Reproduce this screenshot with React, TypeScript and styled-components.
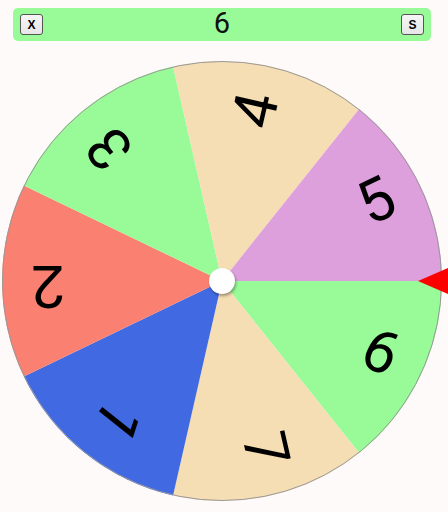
import styled, { createGlobalStyle } from "styled-components";

const GlobalStyle = createGlobalStyle`
  html, body {
    margin: 0;
    padding: 0;
    background: #fffafa;
    font-family: "Liberation Sans", Arial, sans-serif;
    overflow: hidden;
  }
`;

const Wrapper = styled.div`
  width: 444px;
  display: flex;
  flex-direction: column;
  align-items: center;
`;

const Bar = styled.div`
  margin-top: 8px;
  width: 418px;
  height: 33px;
  box-sizing: border-box;
  padding: 0 7px;
  background: #98fb98;
  border-radius: 5px;
  display: flex;
  align-items: center;
  justify-content: space-between;
`;

const Result = styled.div`
  font-family: Roboto, "Liberation Sans", sans-serif;
  font-size: 29px;
  line-height: 29px;
  color: #111;
  margin-top: -3px;
`;

const SmallButton = styled.button`
  width: 23px;
  height: 21px;
  padding: 0;
  box-sizing: border-box;
  border: 1px solid #555;
  border-radius: 3px;
  background: linear-gradient(#f6f6f6, #e6e6e6);
  font-family: "Liberation Sans", Arial, sans-serif;
  font-weight: bold;
  font-size: 12px;
  color: #000;
  display: flex;
  align-items: center;
  justify-content: center;
`;

const WheelBox = styled.div`
  position: relative;
  margin-top: 20px;
  width: 440px;
  height: 440px;
`;

const Label = styled.text`
  font-family: Roboto, "Liberation Sans", sans-serif;
  font-size: 60px;
  fill: #000;
`;

const Hub = styled.div`
  position: absolute;
  left: 50%;
  top: 50%;
  width: 26px;
  height: 26px;
  margin: -13px 0 0 -13px;
  border-radius: 50%;
  background: #fff;
  box-shadow: 1px 2px 3px rgba(0, 0, 0, 0.35);
`;

const Pointer = styled.svg`
  position: absolute;
  right: -6px;
  top: 50%;
  margin-top: -13px;
`;

const segments = [
  { label: "6", color: "#98fb98" },
  { label: "7", color: "#f5deb3" },
  { label: "1", color: "#4169e1" },
  { label: "2", color: "#fa8072" },
  { label: "3", color: "#98fb98" },
  { label: "4", color: "#f5deb3" },
  { label: "5", color: "#dda0dd" },
];

const R = 220;
const step = 360 / segments.length;

const point = (deg: number, r: number) => {
  const a = (deg * Math.PI) / 180;
  return `${(R + r * Math.cos(a)).toFixed(2)} ${(R + r * Math.sin(a)).toFixed(2)}`;
};

const App = () => {
  return (
    <>
      <GlobalStyle />
      <Wrapper>
        <Bar>
          <SmallButton>X</SmallButton>
          <Result>6</Result>
          <SmallButton>S</SmallButton>
        </Bar>
        <WheelBox>
          <svg width="440" height="440" viewBox="0 0 440 440">
            {segments.map((seg, i) => {
              const from = i * step;
              const to = from + step;
              return (
                <path
                  key={i}
                  d={`M ${R} ${R} L ${point(from, R)} A ${R} ${R} 0 0 1 ${point(to, R)} Z`}
                  fill={seg.color}
                />
              );
            })}
            {segments.map((seg, i) => {
              const mid = i * step + step / 2;
              return (
                <g key={i} transform={`rotate(${mid} ${R} ${R})`}>
                  <Label x={R + 174} y={R + 15} textAnchor="middle">
                    {seg.label}
                  </Label>
                </g>
              );
            })}
            <circle cx={R} cy={R} r={R - 0.5} fill="none" stroke="#999" strokeWidth="1" />
          </svg>
          <Hub />
          <Pointer width="30" height="26" viewBox="0 0 30 26">
            <polygon points="0,13 30,0 30,26" fill="#ff0000" />
          </Pointer>
        </WheelBox>
      </Wrapper>
    </>
  );
};

export default App;
